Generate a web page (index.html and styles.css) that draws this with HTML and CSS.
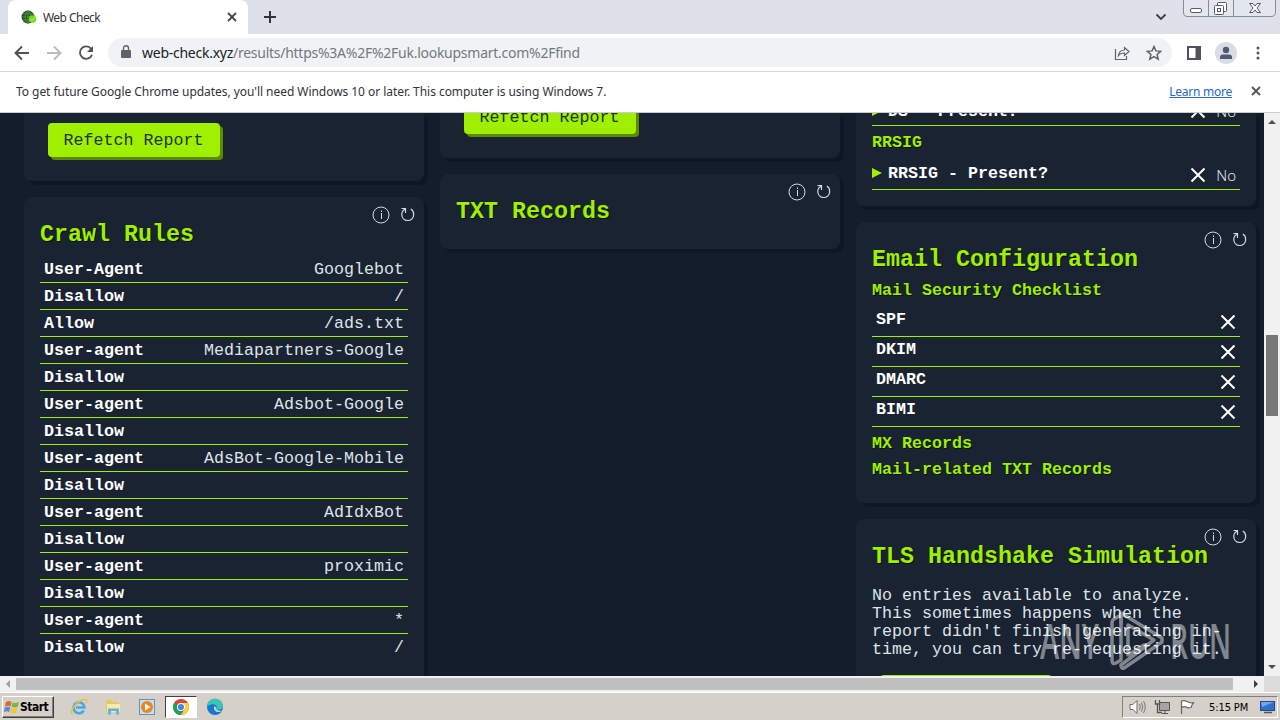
FILE: index.html
```html
<!DOCTYPE html>
<html lang="en">
<head>
    <meta charset="UTF-8">
    <meta name="viewport" content="width=device-width, initial-scale=1.0">
    <title>Web Check</title>
    <link rel="stylesheet" href="styles.css">
</head>
<body>
    <!-- shared icons -->
    <svg class="icon-defs" aria-hidden="true">
        <symbol id="info" viewBox="0 0 18 18">
            <circle cx="9" cy="9" r="8" fill="none" stroke="currentColor"/>
            <path d="M9.500 7V13M9.500 4.500V6" fill="none" stroke="currentColor"/>
        </symbol>
        <symbol id="refresh" viewBox="0 0 16 16">
            <path d="M1.5 1.5H5.5V6M5 2C2.500 3.500 1.800 5.500 1.800 7.500C1.800 11 4.300 13.500 7.700 13.500C11 13.500 13.700 11 13.700 7.500C13.700 5 12.700 3 10.800 2" fill="none" stroke="currentColor" stroke-width="1.200"/>
        </symbol>
        <symbol id="cross" viewBox="0 0 16 16">
            <path d="M1.500 1.500L14.500 14.500M14.500 1.500L1.500 14.500" fill="none" stroke="currentColor" stroke-width="2"/>
        </symbol>
        <symbol id="close" viewBox="0 0 10 10">
            <path d="M1 1L9 9M9 1L1 9" fill="none" stroke="currentColor" stroke-width="1.800"/>
        </symbol>
    </svg>

    <div class="tab-strip">
        <div class="tab">
            <svg class="favicon" viewBox="0 0 16 16">
                <circle cx="7" cy="8" r="6.500" fill="#24521c"/>
                <path d="M1 8H13M7 1.500V14.500M2 5H12M2 11H12M7 1.500C3 5 3 11 7 14.500M7 1.500C11 5 11 11 7 14.500" stroke="#5d8f55" stroke-width=".8" fill="none"/>
                <circle cx="11.500" cy="10" r="3.800" fill="#75d81a"/>
                <path d="M9.500 10L11 11.500L13.500 8.500" stroke="#b9f47a" fill="none"/>
            </svg>
            <span class="tab-title">Web Check</span>
            <svg class="tab-close"><use href="#close"/></svg>
        </div>
        <svg class="new-tab" viewBox="0 0 12 12"><path d="M6 0V12M0 6H12" stroke="#303338" stroke-width="2"/></svg>
        <svg class="tab-search" viewBox="0 0 12 8"><path d="M1.500 1.500L6 6L10.500 1.500" fill="none" stroke="#3c4043" stroke-width="1.800"/></svg>
        <svg class="window-buttons" viewBox="0 0 94 18">
            <path d="M.5 0V13Q.5 16.500 4 16.500H88Q92.500 16.500 92.500 12V0M25.500 0V16M50.500 0V16" fill="#e3e7ed" stroke="#858c99"/>
            <g fill="#fff" stroke="#555b66">
                <rect x="7.500" y="8.500" width="11" height="4" rx="1.500"/>
                <rect x="34.500" y="2.500" width="9" height="9" rx="1"/>
                <rect x="31.500" y="5.500" width="9" height="9" rx="1"/>
                <rect x="34.500" y="8.500" width="3" height="3"/>
                <path d="M66.500 3.500H70L72 6L74 3.500H77.500L74 8L77.500 12.500H74L72 10L70 12.500H66.500L70 8Z"/>
            </g>
        </svg>
    </div>

    <div class="toolbar">
        <div class="nav-icons">
            <svg viewBox="0 0 16 16"><path d="M15 8H2M8 1.500L1.500 8L8 14.500" fill="none" stroke="#505357" stroke-width="1.900"/></svg>
            <svg viewBox="0 0 16 16"><path d="M1 8H14M8 1.500L14.500 8L8 14.500" fill="none" stroke="#b9bbbe" stroke-width="1.900"/></svg>
            <svg viewBox="0 0 16 16"><path d="M13.200 4A6.200 6.200 0 1 0 14 9.700" fill="none" stroke="#505357" stroke-width="1.900"/><path d="M15 1V7H9Z" fill="#505357"/></svg>
        </div>
        <div class="address-bar">
            <svg class="lock" viewBox="0 0 10 13"><path d="M1 5H9Q10 5 10 6V12Q10 13 9 13H1Q0 13 0 12V6Q0 5 1 5Z" fill="#5f6368"/><path d="M2.500 5V3.200A2.500 2.500 0 0 1 7.500 3.200V5" fill="none" stroke="#5f6368" stroke-width="1.400"/></svg>
            <span class="url"><b>web-check.xyz</b>/results/https%3A%2F%2Fuk.lookupsmart.com%2Ffind</span>
            <svg class="share" viewBox="0 0 16 16"><path d="M1.500 4V14.500H12.500V11M4.500 10.500C5 6.500 7.500 5 10.500 5V2.500L15 6.500L10.500 10.500V8C8 8 6 8.500 4.500 10.500Z" fill="none" stroke="#5f6368" stroke-width="1.200"/></svg>
            <svg class="star" viewBox="0 0 16 16"><path d="M8 1.500L9.900 5.900L14.700 6.300L11.100 9.500L12.200 14.200L8 11.700L3.800 14.200L4.900 9.500L1.300 6.300L6.100 5.900Z" fill="none" stroke="#5f6368" stroke-width="1.500"/></svg>
        </div>
        <svg class="side-panel" viewBox="0 0 14 14"><rect x="1" y="1" width="12" height="12" fill="none" stroke="#505357" stroke-width="2"/><path d="M8.500 1H13V13H8.500Z" fill="#505357"/></svg>
        <svg class="profile" viewBox="0 0 22 22"><circle cx="11" cy="11" r="11" fill="#dadde3"/><circle cx="11" cy="8" r="3.200" fill="#505b72"/><path d="M5 17V15Q5 12.500 8 12.500H14Q17 12.500 17 15V17Z" fill="#505b72"/></svg>
        <svg class="more" viewBox="0 0 4 14"><g fill="#505357"><circle cx="2" cy="2" r="1.500"/><circle cx="2" cy="7" r="1.500"/><circle cx="2" cy="12" r="1.500"/></g></svg>
    </div>

    <div class="infobar">
        <span class="infobar-text">To get future Google Chrome updates, you'll need Windows 10 or later. This computer is using Windows 7.</span>
        <a class="learn-more">Learn more</a>
        <svg class="infobar-close"><use href="#close"/></svg>
    </div>

    <div class="viewport">
        <main class="results">
            <div class="column">
                <section class="card card-report">
                    <button class="refetch">Refetch Report</button>
                </section>
                <section class="card card-crawl">
                    <div class="actions"><svg class="i-info"><use href="#info"/></svg><svg class="i-refresh"><use href="#refresh"/></svg></div>
                    <h2>Crawl Rules</h2>
                    <div class="row"><b>User-Agent</b><span>Googlebot</span></div>
                    <div class="row"><b>Disallow</b><span>/</span></div>
                    <div class="row"><b>Allow</b><span>/ads.txt</span></div>
                    <div class="row"><b>User-agent</b><span>Mediapartners-Google</span></div>
                    <div class="row"><b>Disallow</b><span></span></div>
                    <div class="row"><b>User-agent</b><span>Adsbot-Google</span></div>
                    <div class="row"><b>Disallow</b><span></span></div>
                    <div class="row"><b>User-agent</b><span>AdsBot-Google-Mobile</span></div>
                    <div class="row"><b>Disallow</b><span></span></div>
                    <div class="row"><b>User-agent</b><span>AdIdxBot</span></div>
                    <div class="row"><b>Disallow</b><span></span></div>
                    <div class="row"><b>User-agent</b><span>proximic</span></div>
                    <div class="row"><b>Disallow</b><span></span></div>
                    <div class="row"><b>User-agent</b><span>*</span></div>
                    <div class="row"><b>Disallow</b><span>/</span></div>
                </section>
            </div>

            <div class="column">
                <section class="card card-report short">
                    <button class="refetch">Refetch Report</button>
                </section>
                <section class="card card-txt">
                    <div class="actions"><svg class="i-info"><use href="#info"/></svg><svg class="i-refresh"><use href="#refresh"/></svg></div>
                    <h2>TXT Records</h2>
                </section>
            </div>

            <div class="column">
                <section class="card card-dnssec">
                    <div class="row expand"><b><i class="marker"></i>DS - Present?</b><span><svg class="i-cross"><use href="#cross"/></svg> No</span></div>
                    <h3>RRSIG</h3>
                    <div class="row expand"><b><i class="marker"></i>RRSIG - Present?</b><span><svg class="i-cross"><use href="#cross"/></svg> No</span></div>
                </section>
                <section class="card card-mail">
                    <div class="actions"><svg class="i-info"><use href="#info"/></svg><svg class="i-refresh"><use href="#refresh"/></svg></div>
                    <h2>Email Configuration</h2>
                    <h3>Mail Security Checklist</h3>
                    <div class="row check"><b>SPF</b><svg class="i-cross"><use href="#cross"/></svg></div>
                    <div class="row check"><b>DKIM</b><svg class="i-cross"><use href="#cross"/></svg></div>
                    <div class="row check"><b>DMARC</b><svg class="i-cross"><use href="#cross"/></svg></div>
                    <div class="row check"><b>BIMI</b><svg class="i-cross"><use href="#cross"/></svg></div>
                    <h3 class="after-rows">MX Records</h3>
                    <h3>Mail-related TXT Records</h3>
                </section>
                <section class="card card-tls">
                    <div class="actions"><svg class="i-info"><use href="#info"/></svg><svg class="i-refresh"><use href="#refresh"/></svg></div>
                    <h2>TLS Handshake Simulation</h2>
                    <p>No entries available to analyze.<br>This sometimes happens when the<br>report didn't finish generating in-<br>time, you can try re-requesting it.</p>
                    <button class="refetch">Refetch Report</button>
                </section>
            </div>
        </main>

        <div class="scroll-y">
            <svg viewBox="0 0 8 4"><path d="M0 4L4 0L8 4Z" fill="#505050"/></svg>
            <div class="thumb-y"></div>
            <svg viewBox="0 0 8 4"><path d="M0 0L4 4L8 0Z" fill="#505050"/></svg>
        </div>
    </div>

    <div class="scroll-x">
        <svg viewBox="0 0 4 8"><path d="M4 0L0 4L4 8Z" fill="#a0a0a0"/></svg>
        <div class="thumb-x"></div>
        <svg viewBox="0 0 4 8"><path d="M0 0L4 4L0 8Z" fill="#404040"/></svg>
        <div class="corner"></div>
    </div>

    <div class="taskbar">
        <div class="start">
            <svg viewBox="0 0 16 16">
                <path d="M2 3Q5 1 7.500 3L6.500 7.500Q4 6 1 7.500Z" fill="#e8602c"/>
                <path d="M8.500 3.300Q11 5 15 3L13.500 8Q10.500 9 7.500 7.500Z" fill="#76b843"/>
                <path d="M.8 8.500Q4 7 6.300 8.500L5 13Q3 11.500 0 13Z" fill="#4a8de0"/>
                <path d="M7.200 8.700Q10 10.200 13.300 9L12 13.700Q9 15 6 13.300Z" fill="#f5c52d"/>
            </svg>
            <span>Start</span>
        </div>
        <div class="tasks">
            <div class="task">
                <svg viewBox="0 0 18 18"><path d="M13.800 12.500A5.500 5.500 0 1 1 14.500 9.500H6" fill="none" stroke="#45a9e4" stroke-width="2.600"/><path d="M2.500 16.500C-1 14 5 5 12 2C16 .5 17.500 2 16 5" fill="none" stroke="#e9bd3f" stroke-width="1.400"/></svg>
            </div>
            <div class="task">
                <svg viewBox="0 0 18 18"><path d="M2 2H7L8 4H15V14H2Z" fill="#e9c860"/><path d="M3 6H16V14H3Z" fill="#f9e9a9"/><path d="M4 16.500V10.500H15V16.500H12V13H7V16.500Z" fill="#64b2dd"/></svg>
            </div>
            <div class="task">
                <svg viewBox="0 0 18 18"><rect x="1.500" y="1.500" width="15" height="15" fill="#c9def0" stroke="#5b92c8"/><circle cx="9" cy="9" r="6" fill="#ef8418"/><path d="M7 5.500L12.500 9L7 12.500Z" fill="#fff"/></svg>
            </div>
            <div class="task active">
                <svg viewBox="0 0 18 18"><circle cx="9" cy="9" r="8" fill="#db4437"/><path d="M9 9L2.070 5A8 8 0 0 0 9 17L12.500 11Z" fill="#1da15f"/><path d="M9 17A8 8 0 0 0 15.930 5H9L12.500 11Z" fill="#ffcd40"/><circle cx="9" cy="9" r="4" fill="#fff"/><circle cx="9" cy="9" r="3.100" fill="#4285f4"/></svg>
            </div>
            <div class="task">
                <svg viewBox="0 0 18 18"><circle cx="9" cy="9" r="8" fill="#1478cc"/><path d="M1 8.500A8 8 0 0 1 17 8.500C17 11.500 12 12.500 10.500 10.500C12 8 8.500 5.500 5 6.500C3 7 1.500 8 1 8.500Z" fill="#3cc5b4"/><path d="M8 9C7.500 12 10 14.500 13.500 14L16.500 12.500C13 13.500 10 12 10.500 10.500C9.500 8.500 8.500 8 8 9Z" fill="#d5d0c8"/></svg>
            </div>
        </div>
        <div class="tray">
            <svg viewBox="0 0 18 16"><path d="M1 5.500H4L8 1.500V14.500L4 10.500H1Z" fill="#fff" stroke="#6b6b6b"/><path d="M10.500 5Q12 8 10.500 11M12.500 3.500Q15 8 12.500 12.500M14.500 2Q18 8 14.500 14" fill="none" stroke="#777"/></svg>
            <svg viewBox="0 0 18 16"><path d="M5.500 3.500H15.500V11.500H5.500ZM8 14.500H14M11 11.500V14" fill="#a5a5a5" stroke="#555"/><path d="M1.500 1V5H5.500V1M3.500 5V13.500H8" fill="none" stroke="#555" stroke-width="1.300"/></svg>
            <svg viewBox="0 0 18 16"><path d="M2.500 15V1.500M2.500 2Q5 1 8 2.500Q11 4.500 15 3.500Q13 5 12 8.500Q9 9.500 7 8Q5 7 2.500 8.500" fill="#fff" stroke="#666" stroke-width="1.200"/></svg>
            <time>5:15 PM</time>
            <svg class="desktop" viewBox="0 0 18 16"><rect x="2.500" y="2.500" width="14" height="9" fill="#2b6fd0" stroke="#274a86"/><path d="M3 3H16L4 8Z" fill="#6fa8ee"/><path d="M6 13.500H14" stroke="#555" stroke-width="1.500"/></svg>
        </div>
    </div>

    <svg class="watermark" viewBox="0 0 194 64">
        <text x="2" y="51" textLength="59" lengthAdjust="spacingAndGlyphs">ANY</text>
        <text x="132" y="51" textLength="61" lengthAdjust="spacingAndGlyphs">RUN</text>
        <g fill="none" stroke="#fff" stroke-width="3.500" stroke-linejoin="round" stroke-linecap="round">
            <path d="M83 7L76 11Q74 12 74 15V52Q74 57 78 55L83 52V7Z"/>
            <path d="M83 15V5L124 30V34L86 60Q83 61 83 57L116 32L90 17V47L106 37"/>
        </g>
    </svg>
</body>
</html>
```

FILE: styles.css
```css
* {
    box-sizing: border-box;
}

body {
    margin: 0;
    width: 1280px;
    height: 720px;
    overflow: hidden;
    display: flex;
    flex-direction: column;
    font-family: "DejaVu Sans Condensed", "Noto Sans", sans-serif;
    font-size: 12px;
    background: #141d2b;
}

svg {
    display: block;
    flex: none;
}

.icon-defs {
    display: none;
}

/* browser window */
.tab-strip {
    height: 34px;
    flex: none;
    display: flex;
    align-items: center;
    background: #dee1e9;
    padding: 0 3px 0 8px;
}

.tab {
    width: 240px;
    height: 34px;
    display: flex;
    align-items: center;
    padding: 0 11px 0 13px;
    background: #fff;
    border-radius: 8px 8px 0 0;
}

.favicon {
    width: 16px;
    height: 16px;
}

.tab-title {
    flex: 1;
    margin-left: 6px;
    font-family: "Noto Sans", sans-serif;
    color: #303338;
    font-size: 12px;
    letter-spacing: -0.7px;
    letter-spacing: -0.55px;
}

.tab-close {
    width: 10px;
    height: 10px;
    color: #45484d;
}

.new-tab {
    width: 12px;
    height: 12px;
    margin-left: 16px;
}

.tab-search {
    width: 12px;
    height: 8px;
    margin-left: auto;
    margin-right: 16px;
}

.window-buttons {
    width: 94px;
    height: 18px;
    align-self: flex-start;
}

.toolbar {
    height: 38px;
    flex: none;
    display: flex;
    align-items: center;
    padding: 0 20px 0 14px;
    background: #fff;
    border-bottom: 1px solid #d5d7da;
}

.nav-icons {
    display: flex;
    gap: 16px;
}

.nav-icons svg {
    width: 16px;
    height: 16px;
}

.address-bar {
    width: 1064px;
    height: 29px;
    margin-left: 14px;
    padding: 0 10px 0 13px;
    display: flex;
    align-items: center;
    background: #f0f3f6;
    border-radius: 15px;
}

.lock {
    width: 10px;
    height: 13px;
    margin-top: -2px;
}

.url {
    flex: 1;
    margin-left: 11px;
    font-family: "Noto Sans", sans-serif;
    font-size: 14px;
    letter-spacing: -0.26px;
    color: #74787d;
}

.url b {
    font-weight: normal;
    color: #202124;
}

.share,
.star {
    width: 16px;
    height: 16px;
}

.star {
    margin-left: 16px;
}

.side-panel {
    width: 14px;
    height: 14px;
    margin-left: 15px;
}

.profile {
    width: 22px;
    height: 22px;
    margin-left: 14px;
}

.more {
    width: 4px;
    height: 14px;
    margin-left: auto;
}

.infobar {
    height: 41px;
    flex: none;
    display: flex;
    align-items: center;
    padding: 0 19px 2px 16px;
    background: #fff;
    border-bottom: 1px solid #c9ccd0;
    font-family: "Noto Sans", sans-serif;
    font-size: 12px;
    color: #303338;
}

.infobar-text {
    flex: 1;
    white-space: nowrap;
    letter-spacing: -0.05px;
}

.learn-more {
    color: #2a66c8;
    text-decoration: underline;
    letter-spacing: -0.25px;
}

.infobar-close {
    width: 10px;
    height: 10px;
    margin-left: 19px;
    color: #505357;
}

/* page */
.viewport {
    height: 563px;
    flex: none;
    display: flex;
    overflow: hidden;
}

.results {
    width: 1264px;
    display: flex;
    gap: 16px;
    padding: 0 8px 0 24px;
    background: #141d2b;
    font-family: "Liberation Mono", monospace;
    font-size: 16.66px;
    color: #fff;
}

.column {
    width: 400px;
    height: 563px;
    flex: none;
    display: flex;
    flex-direction: column;
    gap: 16px;
}

.card {
    position: relative;
    flex: none;
    padding: 0 16px;
    background: #1a2332;
    border-radius: 8px;
    box-shadow: 4px 4px 0 #0f1724;
}

.card-report,
.card-dnssec {
    display: flex;
    flex-direction: column;
    justify-content: flex-end;
    border-radius: 0 0 8px 8px;
}

.card-report {
    height: 68px;
    padding: 0 24px 24px;
}

.card-report.short {
    height: 45px;
}

.card-crawl {
    height: 500px;
    padding-top: 25px;
}

.card-txt {
    height: 75px;
    padding-top: 25px;
}

.card-dnssec {
    height: 93px;
    padding-bottom: 16px;
}

.card-mail {
    height: 281px;
    padding-top: 25px;
}

.card-tls {
    height: 220px;
    padding-top: 25px;
}

.refetch {
    width: 172px;
    height: 34px;
    flex: none;
    padding: 0 1px 0 0;
    border: 0;
    border-radius: 4px;
    background: #9fef00;
    box-shadow: 3px 3px 0 #5c8a00;
    color: #23351f;
    font-family: inherit;
    font-size: 16.66px;
}

.actions {
    position: absolute;
    top: 9px;
    right: 8px;
    display: flex;
    align-items: center;
    gap: 10px;
    color: #d5dae2;
}

.i-info {
    width: 18px;
    height: 18px;
}

.i-refresh {
    width: 16px;
    height: 16px;
}

h2 {
    margin: 0;
    height: 34px;
    line-height: 26px;
    font-size: 23.33px;
    color: #9fef00;
    text-shadow: 1px 1px 0 #0b1208;
    white-space: nowrap;
}

h3 {
    margin: 0;
    height: 26px;
    line-height: 20px;
    font-size: 16.66px;
    color: #9fef00;
    text-shadow: 1px 1px 0 #0b1208;
}

.row {
    height: 27px;
    display: flex;
    justify-content: space-between;
    padding: 4px 4px 0;
    line-height: 19px;
    border-bottom: 1px solid #9fef00;
}

.row span,
.card-tls p {
    color: #dfe3e8;
}

.row:last-child {
    border-bottom: 0;
}

.row.check {
    height: 30px;
    line-height: 18px;
    border-bottom: 1px solid #9fef00;
}

.i-cross {
    width: 16px;
    height: 16px;
    color: #fff;
}

.check .i-cross {
    margin-top: 3px;
}

.after-rows {
    margin-top: 7px;
}

.row.expand {
    height: 38px;
    flex: none;
    padding: 11px 4px 0 0;
    border-bottom: 1px solid #9fef00;
}

.card-dnssec h3 {
    height: 26px;
    line-height: 34px;
    flex: none;
}

.expand b,
.expand span {
    display: flex;
    align-items: center;
    height: 20px;
}

.expand span {
    gap: 10px;
    margin-top: 2px;
    font-family: "Noto Sans", sans-serif;
    font-size: 15px;
    font-weight: 300;
}

.expand:first-child b {
    margin-top: 2px;
}

.marker {
    border-left: 10px solid #9fef00;
    border-top: 5px solid transparent;
    border-bottom: 5px solid transparent;
    margin-right: 6px;
}

.card-tls p {
    margin: 9px 0 16px;
    line-height: 18px;
    white-space: nowrap;
}

.card-tls .refetch {
    display: block;
    margin-left: 8px;
}

/* scrollbars */
.scroll-y {
    width: 16px;
    display: flex;
    flex-direction: column;
    align-items: center;
    justify-content: space-between;
    padding: 7px 0;
    background: #f1f1f1;
}

.scroll-y svg {
    width: 8px;
    height: 4px;
}

.thumb-y {
    width: 12px;
    height: 81px;
    margin-bottom: 38px;
    background: #787878;
}

.scroll-x {
    height: 16px;
    flex: none;
    display: flex;
    align-items: center;
    padding-left: 6px;
    background: #f1f1f1;
}

.scroll-x svg {
    width: 4px;
    height: 8px;
}

.thumb-x {
    width: 1217px;
    height: 12px;
    margin-left: 6px;
    margin-right: auto;
    background: #bfbfbf;
}

.corner {
    width: 16px;
    height: 16px;
    margin-left: 6px;
    background: #dcdcdc;
}

/* taskbar */
.taskbar {
    height: 28px;
    flex: none;
    display: flex;
    align-items: center;
    padding: 1px 2px 0;
    background: #d5d0c8;
    border-top: 1px solid #fff;
}

.start {
    width: 52px;
    height: 22px;
    display: flex;
    align-items: center;
    padding-left: 1px;
    border: 1px solid;
    border-color: #fff #404040 #404040 #fff;
    box-shadow: inset -1px -1px 0 #808080;
    color: #000;
    font-weight: bold;
    font-size: 12px;
    letter-spacing: -0.5px;
}

.start svg {
    width: 16px;
    height: 16px;
}

.tasks {
    display: flex;
    margin-left: 9px;
    gap: 2px;
}

.task {
    width: 32px;
    height: 22px;
    display: flex;
    align-items: center;
    justify-content: center;
}

.task svg {
    width: 18px;
    height: 18px;
}

.task.active {
    background: #fff;
    border: 1px solid;
    border-color: #404040 #fff #fff #404040;
}

.tray {
    width: 156px;
    height: 22px;
    margin-left: auto;
    display: flex;
    align-items: center;
    padding: 0 0 0 6px;
    gap: 7px;
    border: 1px solid;
    border-color: #808080 #fff #fff #808080;
    color: #000;
    font-size: 11px;
}

.tray svg {
    width: 18px;
    height: 16px;
}

.tray time {
    width: 42px;
    margin-left: 5px;
    white-space: nowrap;
    letter-spacing: -0.1px;
}

/* lies over the page */
.watermark {
    position: absolute;
    left: 1038px;
    top: 608px;
    width: 194px;
    height: 64px;
    opacity: 0.45;
}

.watermark text {
    font-family: "Open Sans", sans-serif;
    font-size: 49px;
    font-weight: 600;
    fill: #fff;
}
```
